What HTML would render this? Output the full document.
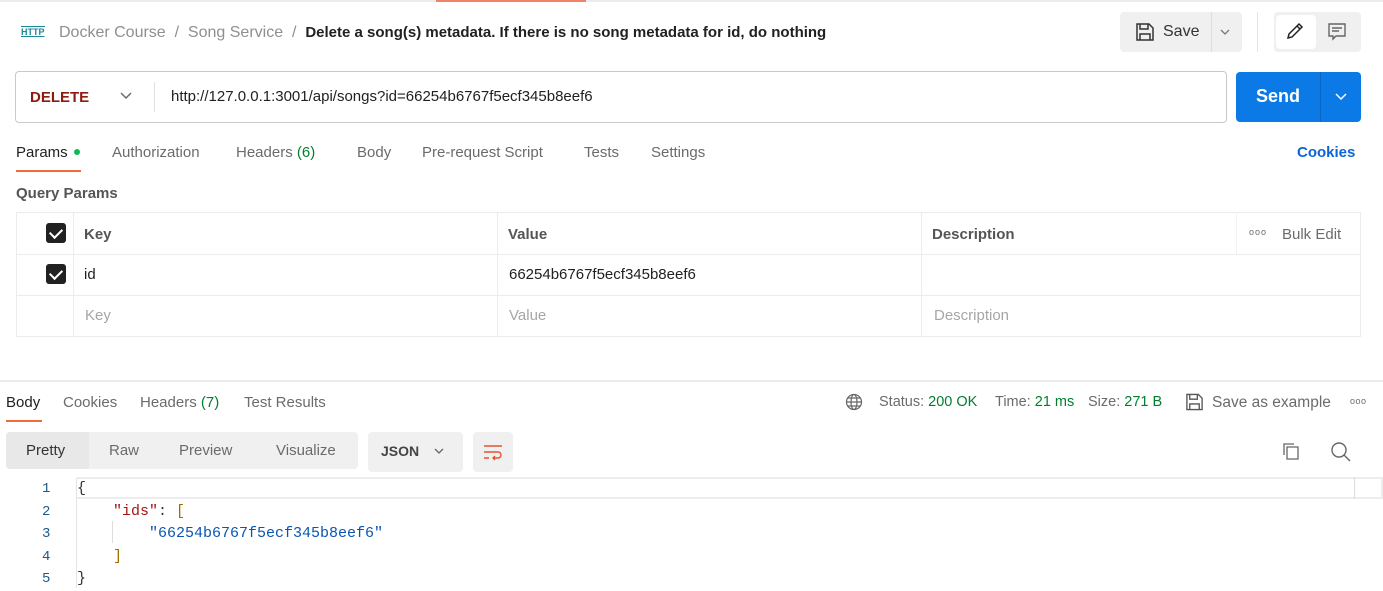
<!DOCTYPE html>
<html><head><meta charset="utf-8"><style>
*{box-sizing:border-box;margin:0;padding:0}
body{width:1383px;height:589px;overflow:hidden;background:#fff;font-family:"Liberation Sans",Arial,sans-serif;font-size:15px;color:#212121;position:relative}
.a{position:absolute;white-space:nowrap}
.g{color:#6b6b6b}
.mono{font-family:"Liberation Mono",monospace;font-size:15px}
.cb{position:absolute;width:20px;height:20px;background:#212121;border-radius:3px}
.cb:after{content:"";position:absolute;left:6px;top:3px;width:6px;height:10px;border:solid #fff;border-width:0 2.5px 2.5px 0;transform:rotate(45deg)}
</style></head><body>
<div class="a" style="left:0;top:0;width:1383px;height:2px;background:#ececec"></div>
<div class="a" style="left:436px;top:0;width:150px;height:2px;background:#f0826a"></div>
<div class="a" style="left:21px;top:26px;font-size:9px;color:#1c8a96;font-weight:bold;text-decoration:underline;border-top:1px solid #1c8a96;line-height:10px">HTTP</div>
<div class="a" style="left:59px;top:24px;font-size:16px;color:#8f8f8f">Docker Course&nbsp; / &nbsp;Song Service&nbsp; / &nbsp;<span style="color:#212121;font-weight:bold;font-size:15px">Delete a song(s) metadata. If there is no song metadata for id, do nothing</span></div>
<div class="a" style="left:1120px;top:12px;width:122px;height:40px;background:#f0f0f0;border-radius:4px"></div>
<div class="a" style="left:1211px;top:12px;width:1px;height:40px;background:#ddd"></div>
<svg class="a" style="left:1135px;top:22px" width="20" height="20" viewBox="0 0 20 20"><path d="M2 2h12l4 4v12H2z M5 2v5h8V2 M5 18v-6h10v6" fill="none" stroke="#333" stroke-width="1.5"/></svg>
<div class="a" style="left:1163px;top:23px;font-size:16px;color:#333">Save</div>
<svg class="a" style="left:1219px;top:27px" width="12" height="10"><path d="M2 3l4 4 4-4" fill="none" stroke="#777" stroke-width="1.3"/></svg>
<div class="a" style="left:1257px;top:12px;width:1px;height:40px;background:#e5e5e5"></div>
<div class="a" style="left:1274px;top:12px;width:87px;height:40px;background:#f0f0f0;border-radius:4px"></div>
<div class="a" style="left:1276px;top:15px;width:40px;height:34px;background:#fff;border-radius:4px"></div>
<svg class="a" style="left:1285px;top:21px" width="20" height="20" viewBox="0 0 20 20"><path d="M3 17l1-4L14 3l3 3L7 16z M12 5l3 3" fill="none" stroke="#222" stroke-width="1.5"/></svg>
<svg class="a" style="left:1327px;top:22px" width="20" height="20" viewBox="0 0 20 20"><path d="M2 2h16v12H9l-3 3v-3H2z M5 6h10 M5 9h7" fill="none" stroke="#666" stroke-width="1.4"/></svg>
<div class="a" style="left:15px;top:71px;width:1212px;height:52px;border:1px solid #c9c9c9;border-radius:4px"></div>
<div class="a" style="left:154px;top:82px;width:1px;height:30px;background:#e0e0e0"></div>
<div class="a" style="left:30px;top:89px;font-size:15px;font-weight:bold;color:#8e1a10">DELETE</div>
<svg class="a" style="left:119px;top:91px" width="14" height="10"><path d="M2 2l5 5 5-5" fill="none" stroke="#666" stroke-width="1.4"/></svg>
<div class="a" style="left:171px;top:88px;font-size:15px;color:#212121">http://127.0.0.1:3001/api/songs?id=66254b6767f5ecf345b8eef6</div>
<div class="a" style="left:1236px;top:72px;width:125px;height:50px;background:#0c7ae6;border-radius:4px"></div>
<div class="a" style="left:1320px;top:72px;width:1px;height:50px;background:#0a66c2"></div>
<div class="a" style="left:1256px;top:86px;font-size:18px;font-weight:bold;color:#fff">Send</div>
<svg class="a" style="left:1334px;top:92px" width="14" height="10"><path d="M2 2l5 5 5-5" fill="none" stroke="#fff" stroke-width="1.5"/></svg>
<div class="a" style="left:16px;top:144px">Params <span style="display:inline-block;width:6px;height:6px;border-radius:50%;background:#0cbb52;vertical-align:middle;margin:0 0 2px 2px"></span></div>
<div class="a g" style="left:112px;top:144px">Authorization</div>
<div class="a g" style="left:236px;top:144px">Headers <span style="color:#007f31">(6)</span></div>
<div class="a g" style="left:357px;top:144px">Body</div>
<div class="a g" style="left:422px;top:144px">Pre-request Script</div>
<div class="a g" style="left:584px;top:144px">Tests</div>
<div class="a g" style="left:651px;top:144px">Settings</div>
<div class="a" style="left:16px;top:170px;width:65px;height:2px;background:#f26b3a"></div>
<div class="a" style="left:1297px;top:144px;color:#0b65d8;font-weight:bold">Cookies</div>
<div class="a" style="left:16px;top:185px;color:#555;font-weight:bold">Query Params</div>
<div class="a" style="left:16px;top:212px;width:1345px;height:125px;border:1px solid #ececec"></div>
<div class="a" style="left:16px;top:254px;width:1345px;height:1px;background:#ececec"></div>
<div class="a" style="left:16px;top:295px;width:1345px;height:1px;background:#ececec"></div>
<div class="a" style="left:73px;top:212px;width:1px;height:125px;background:#ececec"></div>
<div class="a" style="left:497px;top:212px;width:1px;height:125px;background:#ececec"></div>
<div class="a" style="left:921px;top:212px;width:1px;height:125px;background:#ececec"></div>
<div class="a" style="left:1236px;top:212px;width:1px;height:42px;background:#f2f2f2"></div>
<div class="cb" style="left:46px;top:223px"></div>
<div class="cb" style="left:46px;top:264px"></div>
<div class="a" style="left:84px;top:226px;font-weight:bold;color:#555">Key</div>
<div class="a" style="left:508px;top:226px;font-weight:bold;color:#555">Value</div>
<div class="a" style="left:932px;top:226px;font-weight:bold;color:#555">Description</div>
<div class="a g" style="left:1249px;top:227px;font-size:9px;letter-spacing:1px">ooo</div>
<div class="a g" style="left:1282px;top:226px">Bulk Edit</div>
<div class="a" style="left:84px;top:266px">id</div>
<div class="a" style="left:509px;top:266px">66254b6767f5ecf345b8eef6</div>
<div class="a" style="left:85px;top:307px;color:#a6a6a6">Key</div>
<div class="a" style="left:509px;top:307px;color:#a6a6a6">Value</div>
<div class="a" style="left:934px;top:307px;color:#a6a6a6">Description</div>
<div class="a" style="left:0;top:380px;width:1383px;height:2px;background:#ececec"></div>
<div class="a" style="left:6px;top:394px">Body</div>
<div class="a g" style="left:63px;top:394px">Cookies</div>
<div class="a g" style="left:140px;top:394px">Headers <span style="color:#007f31">(7)</span></div>
<div class="a g" style="left:244px;top:394px">Test Results</div>
<div class="a" style="left:6px;top:420px;width:36px;height:2px;background:#f26b3a"></div>
<svg class="a" style="left:845px;top:393px" width="18" height="18" viewBox="0 0 18 18"><g fill="none" stroke="#666" stroke-width="1.2"><circle cx="9" cy="9" r="7.5"/><ellipse cx="9" cy="9" rx="3" ry="7.5"/><path d="M1.5 9h15M3 5h12M3 13h12"/></g></svg>
<div class="a g" style="left:879px;top:394px;font-size:14.5px">Status: <span style="color:#007f31">200 OK</span></div>
<div class="a g" style="left:995px;top:394px;font-size:14.5px">Time: <span style="color:#007f31">21 ms</span></div>
<div class="a g" style="left:1088px;top:394px;font-size:14.5px">Size: <span style="color:#007f31">271 B</span></div>
<svg class="a" style="left:1185px;top:392px" width="19" height="20" viewBox="0 0 20 20"><path d="M2 2h12l4 4v12H2z M5 2v5h8V2 M5 18v-6h10v6" fill="none" stroke="#555" stroke-width="1.4"/></svg>
<div class="a g" style="left:1212px;top:394px;font-size:15.5px">Save as example</div>
<div class="a g" style="left:1350px;top:396px;font-size:9px;letter-spacing:0.5px">ooo</div>
<div class="a" style="left:6px;top:432px;width:352px;height:37px;background:#f0f0f0;border-radius:4px"></div>
<div class="a" style="left:6px;top:432px;width:83px;height:37px;background:#e8e8e8;border-radius:4px 0 0 4px"></div>
<div class="a" style="left:26px;top:442px;color:#333">Pretty</div>
<div class="a g" style="left:109px;top:442px">Raw</div>
<div class="a g" style="left:179px;top:442px">Preview</div>
<div class="a g" style="left:276px;top:442px">Visualize</div>
<div class="a" style="left:368px;top:432px;width:95px;height:40px;background:#f0f0f0;border-radius:4px"></div>
<div class="a" style="left:381px;top:443px;font-weight:bold;color:#444;font-size:14px">JSON</div>
<svg class="a" style="left:433px;top:447px" width="12" height="10"><path d="M2 2l4 4 4-4" fill="none" stroke="#666" stroke-width="1.3"/></svg>
<div class="a" style="left:473px;top:432px;width:40px;height:40px;background:#f0f0f0;border-radius:4px"></div>
<svg class="a" style="left:483px;top:442px" width="20" height="20" viewBox="0 0 20 20"><path d="M1 4h18M1 10h14a3 3 0 010 6h-5M12 14l-2 2 2 2M1 16h5" fill="none" stroke="#e0552f" stroke-width="1.4"/></svg>
<svg class="a" style="left:1281px;top:441px" width="20" height="20" viewBox="0 0 20 20"><path d="M6 6h11v12H6z M3 14V3h10" fill="none" stroke="#666" stroke-width="1.3"/></svg>
<svg class="a" style="left:1330px;top:441px" width="22" height="22" viewBox="0 0 22 22"><circle cx="9" cy="9" r="7" fill="none" stroke="#666" stroke-width="1.4"/><path d="M14 14l6 6" stroke="#666" stroke-width="1.4"/></svg>
<div class="a" style="left:77px;top:477px;width:1306px;height:22px;border:2px solid #ececec;border-left:none"></div>
<div class="a" style="left:1354px;top:477px;width:1px;height:22px;background:#ddd"></div>
<div class="a" style="left:76px;top:478px;width:1px;height:110px;background:#e4e4e4"></div>
<div class="a" style="left:112px;top:521px;width:1px;height:22px;background:#ddd"></div>
<div class="a mono" style="left:42px;top:478px;line-height:22.5px;color:#1c5a8a;font-size:14px">1<br>2<br>3<br>4<br>5</div>
<div class="a mono" style="left:77px;top:478px;line-height:22.5px;color:#333">{<br>&nbsp;&nbsp;&nbsp;&nbsp;<span style="color:#a31515">"ids"</span>: <span style="color:#a07000">[</span><br>&nbsp;&nbsp;&nbsp;&nbsp;&nbsp;&nbsp;&nbsp;&nbsp;<span style="color:#0b55b0">"66254b6767f5ecf345b8eef6"</span><br>&nbsp;&nbsp;&nbsp;&nbsp;<span style="color:#a07000">]</span><br>}</div>
</body></html>
